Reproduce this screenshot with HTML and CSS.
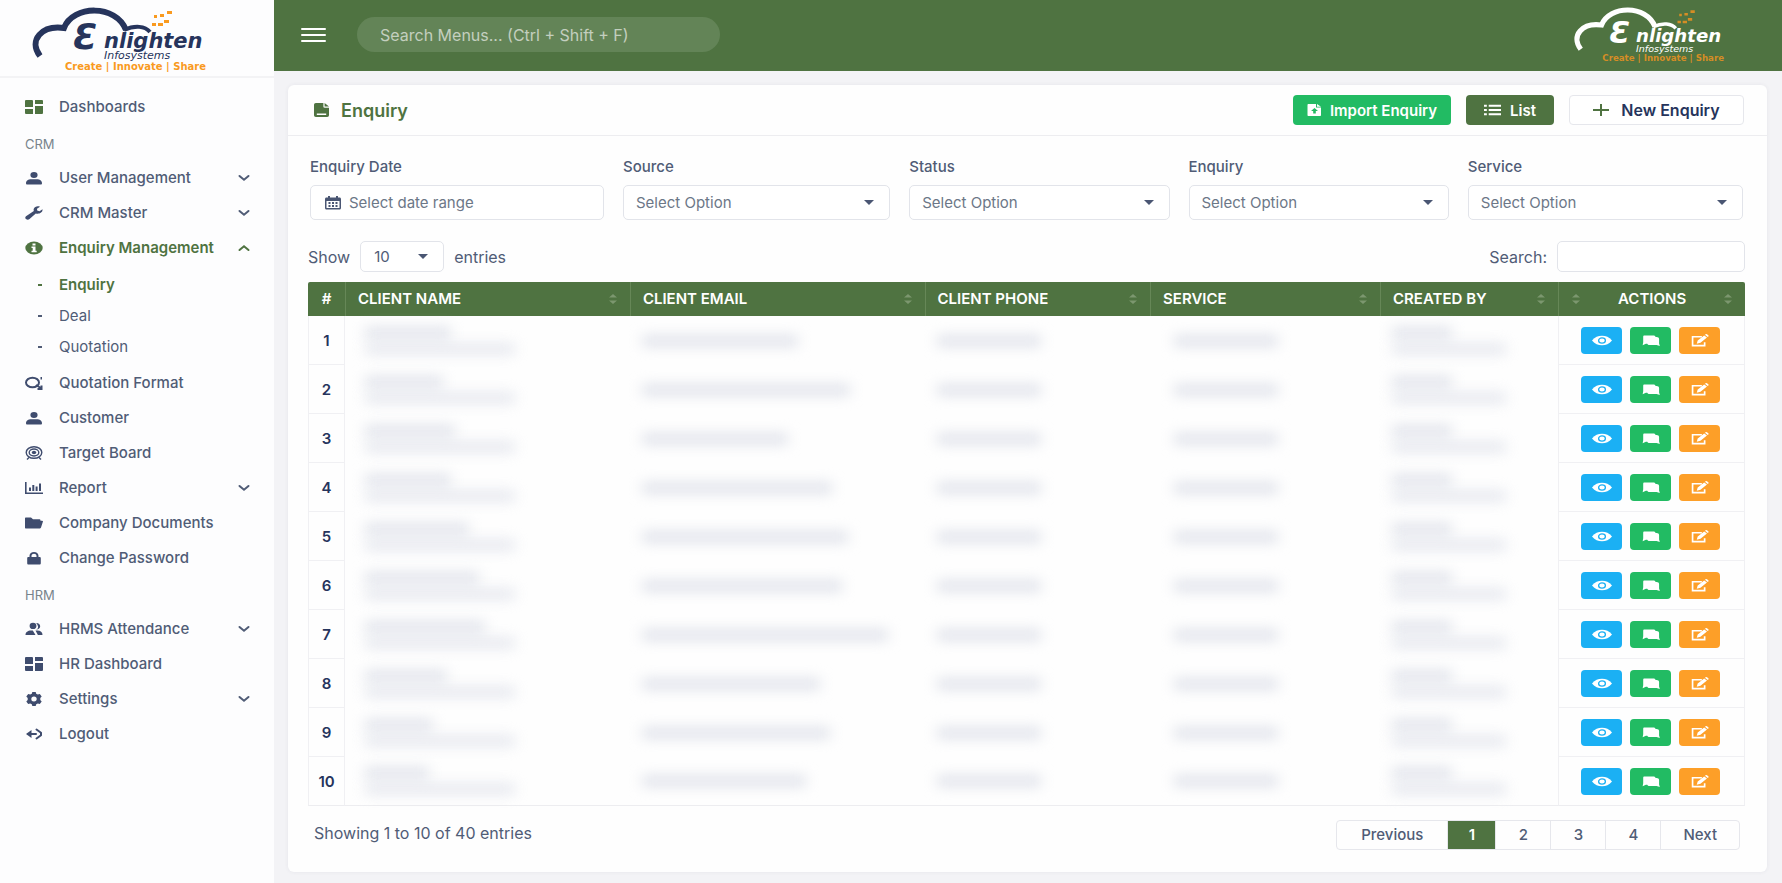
FILE: index.html
```html
<!DOCTYPE html>
<html lang="en">
<head>
  <meta charset="UTF-8">
  <meta name="viewport" content="width=device-width, initial-scale=1.0">
  <title>Enlighten Infosystems - Enquiry</title>
  <link rel="stylesheet" href="styles.css">
</head>
<body>
  <!-- Icons -->
  <svg class="sprite" aria-hidden="true">
    <symbol id="i-dashboard" viewBox="0 0 18 14" preserveAspectRatio="none"><path d="M1 0h6a1 1 0 0 1 1 1v6H0V1a1 1 0 0 1 1-1zM0 9h8v5H1a1 1 0 0 1-1-1zM10 0h7a1 1 0 0 1 1 1v3h-8zM10 6h8v7a1 1 0 0 1-1 1h-7z"/></symbol>
    <symbol id="i-user" viewBox="0 0 18 14"><path d="M9 1a3.600 3 0 1 1 0 6 3.600 3 0 0 1 0-6zM1 12.300C1 9.500 3.500 8.200 6 8.200h6c2.500 0 5 1.300 5 4.100 0 .8-.5 1.200-1.200 1.200H2.200c-.7 0-1.200-.4-1.200-1.200z"/></symbol>
    <symbol id="i-wrench" viewBox="0 0 18 14"><path d="M17.500 3.200l-3 2-2.300-.7-.2-1.800L15 .7C12.500-.3 9.500.6 8.800 2.800c-.3.9-.2 1.500 0 2.200L1 10.300c-1 .8-1 2 0 2.800s2.600.7 3.500 0l6.300-5.700c3.200 1 7.200-.8 6.700-4.200z"/></symbol>
    <symbol id="i-info" viewBox="0 0 18 14"><ellipse cx="9" cy="7" rx="8.700" ry="6.500"/><path d="M7.500 2.500h3v2h-3zM6.500 5.500h4v4.300h1.200v1.400H6.500V9.800h1.200V6.900H6.500z" fill="#fff"/></symbol>
    <symbol id="i-quote" viewBox="0 0 18 14"><g fill="none" stroke="currentColor" stroke-width="2"><ellipse cx="7.500" cy="6.500" rx="6.500" ry="4.800"/><path d="M11 9l5.500 3.500M16.500 9.500v3.500h-4"/></g><path d="M15.500 1h1.500v2.500h-1.500z"/></symbol>
    <symbol id="i-target" viewBox="0 0 18 14"><g fill="none" stroke="currentColor" stroke-width="1.400"><ellipse cx="9" cy="6.500" rx="7.800" ry="5.800"/><ellipse cx="9" cy="6.500" rx="4.800" ry="3.500"/><path d="M4 11.500L2 13.500M14 11.500l2 2"/></g><ellipse cx="9" cy="6.500" rx="2.200" ry="1.700"/></symbol>
    <symbol id="i-chart" viewBox="0 0 18 14"><path d="M0 1h1.600v10.500H18V13H0zM4 6.500h2V10H4zM7.300 4h2v6h-2zM10.600 5.500h2V10h-2zM14 2.500h2V10h-2z"/></symbol>
    <symbol id="i-folder" viewBox="0 0 18 14"><path d="M1 1.500h5l2 1.800h6c1 0 1.500.5 1.500 1.400H17c1 0 1.200.6.8 1.300L16 11.500c-.4.700-.8 1-1.600 1H1c-.7 0-1-.4-1-1v-9c0-.6.3-1 1-1z"/></symbol>
    <symbol id="i-lock" viewBox="0 0 18 14"><path d="M4.500 6V4.800C4.500 2.500 6.500 1 9 1s4.500 1.500 4.500 3.800V6h1c.8 0 1.300.5 1.300 1.200v5c0 .8-.5 1.300-1.300 1.300h-11c-.8 0-1.300-.5-1.300-1.300v-5C2.200 6.500 2.700 6 3.500 6zm2 0h5V4.800c0-1.300-1.200-2-2.500-2s-2.500.7-2.500 2z"/></symbol>
    <symbol id="i-users" viewBox="0 0 18 14"><path d="M8 .8a3.400 3.100 0 1 1 0 6.200 3.400 3.100 0 0 1 0-6.200zM.5 13c0-3 2.500-4.600 5.300-4.600h2L10.500 13zM11 7.500c2-.5 2.700-2.500 1.500-4.600-.6-1-.9-1.400-1.500-1.900 2.500-.2 4.200 1.300 4.200 3.200S13.500 7.700 11 7.500zM10.500 8.400h2c3 0 5 1.600 5 4.600h-4.600z"/></symbol>
    <symbol id="i-gear" viewBox="0 0 18 14"><path fill-rule="evenodd" d="M7.300 0h3.400l.5 1.800 1.600.8 2-.6 1.900 2.500-1.400 1.400v2.200l1.400 1.400-1.900 2.500-2-.6-1.600.8-.5 1.800H7.300l-.5-1.800-1.600-.8-2 .6-1.900-2.500 1.400-1.400V5.900L1.300 4.500 3.200 2l2 .6 1.600-.8zM9 4.500a2.700 2.500 0 1 0 0 5 2.700 2.500 0 0 0 0-5z"/></symbol>
    <symbol id="i-logout" viewBox="0 0 18 14"><g fill="none" stroke="currentColor" stroke-width="2" stroke-linecap="round" stroke-linejoin="round"><path d="M11 7H3"/><path d="M11.500 2.500l4.500 3.300v2.400l-4.500 3.300"/></g><path d="M6.500 3v8L1 7z"/></symbol>
    <symbol id="i-down" viewBox="0 0 12 8"><path d="M1.500 2L6 5.800 10.500 2" fill="none" stroke="currentColor" stroke-width="2" stroke-linecap="round"/></symbol>
    <symbol id="i-up" viewBox="0 0 12 8"><path d="M1.500 6L6 2.200 10.500 6" fill="none" stroke="currentColor" stroke-width="2" stroke-linecap="round"/></symbol>
    <symbol id="i-file" viewBox="0 0 16 14" preserveAspectRatio="none"><path d="M2 0h8v3.500c0 .8.500 1.200 1.300 1.200H16V12c0 1.300-.7 2-2 2H2c-1.300 0-2-.7-2-2V2C0 .7.700 0 2 0zM11.300 0L16 3.600h-4.700z"/><path d="M3 10.500h10V12H3z" fill="#fff"/></symbol>
    <symbol id="i-import" viewBox="0 0 14 12"><path d="M1.500 0H9v3.500h5V11c0 .6-.4 1-1 1H1.500c-.6 0-1-.4-1-1V1c0-.6.400-1 1-1zM10 0l4 2.700h-4z"/><path d="M7.500 4L4 7h2.200v2.500h2.600V7H11z" fill="#22bb63"/></symbol>
    <symbol id="i-list" viewBox="0 0 18 12"><path d="M0 .5h3v2H0zM0 5h3v2H0zM0 9.500h3v2H0zM5 .5h13v2H5zM5 5h13v2H5zM5 9.500h13v2H5z"/></symbol>
    <symbol id="i-plus" viewBox="0 0 16 12"><path d="M7 0h2v5h7v2H9v5H7V7H0V5h7z"/></symbol>
    <symbol id="i-calendar" viewBox="0 0 16 14"><path fill-rule="evenodd" d="M3 0h2v1.500h6V0h2v1.500h1.500c.9 0 1.500.6 1.500 1.500v9c0 .9-.6 1.500-1.500 1.500h-13C.6 13.500 0 12.900 0 12V3c0-.9.600-1.500 1.500-1.500H3zM1.500 5v7h13V5z"/><path d="M3.500 6h2v2h-2zM7 6h2v2H7zM10.500 6h2v2h-2zM3.500 9h2v2h-2zM7 9h2v2H7zM10.500 9h2v2h-2z"/></symbol>
    <symbol id="i-sort" viewBox="0 0 10 12"><path d="M5 1l4 3.500H1zM5 11l4-3.500H1z"/></symbol>
    <symbol id="i-eye" viewBox="0 0 20 12"><path d="M0 6C3 2.500 6 1.200 10 1.200S17 2.500 20 6c-3 3.500-6 4.800-10 4.800S3 9.500 0 6z"/><ellipse cx="10" cy="6" rx="3.400" ry="2.600" fill="none" stroke="#1bb0f4" stroke-width="1.300"/></symbol>
    <symbol id="i-chat" viewBox="0 0 20 14"><path d="M3 1.500h9.500c1.400 0 2.300.6 2.500 1.800h1c1.700 0 2.700.8 2.700 2.200v4.800l.8 2.700-3.500-1.200H8.500c-1.300 0-2.200-.4-2.500-1.300H4.500L1 12l.6-3V3c0-1 .4-1.500 1.400-1.500z"/></symbol>
    <symbol id="i-edit" viewBox="0 0 20 14"><path d="M12 3H2v9.500h13V9" fill="none" stroke="currentColor" stroke-width="1.800"/><path d="M6.500 10.500l1-3.500 7-5.500 3 2.300-7 5.700zM15.300.9L16.500 0c.4-.2 2.800 1.500 3 2.200l-1.200 1z"/></symbol>
  </svg>

  <aside class="sidebar">
    <a href="#" class="brand" aria-label="Enlighten Infosystems">
      <svg class="logo" viewBox="30 6 178 66">
        <path class="logo-cloud" d="M40 56C28 40 42 25 64 28 73 5 116 4 126 30"/>
        <path class="logo-tail" d="M124 30c11-5 21-4 26 2"/>
        <text class="logo-e" x="73" y="49">Ɛ</text>
        <text class="logo-name" x="104" y="48">nlighten</text>
        <text class="logo-sub" x="104" y="59">Infosystems</text>
        <text class="logo-tag" x="65" y="70">Create | Innovate | Share</text>
        <path class="logo-dots" d="M167 11h5v3h-5zM160 14h4v3h-4zM154 15h3v3h-3zM164 20h5v3h-5zM158 23h5v3h-5zM152 23h4v3h-4z"/>
      </svg>
    </a>
    <nav class="menu">
      <a href="#" class="menu-item"><svg class="icon green"><use href="#i-dashboard"/></svg>Dashboards</a>
      <div class="menu-head">CRM</div>
      <a href="#" class="menu-item"><svg class="icon"><use href="#i-user"/></svg>User Management<svg class="arrow"><use href="#i-down"/></svg></a>
      <a href="#" class="menu-item"><svg class="icon"><use href="#i-wrench"/></svg>CRM Master<svg class="arrow"><use href="#i-down"/></svg></a>
      <a href="#" class="menu-item active"><svg class="icon"><use href="#i-info"/></svg>Enquiry Management<svg class="arrow"><use href="#i-up"/></svg></a>
      <div class="submenu">
        <a href="#" class="active">Enquiry</a>
        <a href="#">Deal</a>
        <a href="#">Quotation</a>
      </div>
      <a href="#" class="menu-item"><svg class="icon"><use href="#i-quote"/></svg>Quotation Format</a>
      <a href="#" class="menu-item"><svg class="icon"><use href="#i-user"/></svg>Customer</a>
      <a href="#" class="menu-item"><svg class="icon"><use href="#i-target"/></svg>Target Board</a>
      <a href="#" class="menu-item"><svg class="icon"><use href="#i-chart"/></svg>Report<svg class="arrow"><use href="#i-down"/></svg></a>
      <a href="#" class="menu-item"><svg class="icon"><use href="#i-folder"/></svg>Company Documents</a>
      <a href="#" class="menu-item"><svg class="icon"><use href="#i-lock"/></svg>Change Password</a>
      <div class="menu-head">HRM</div>
      <a href="#" class="menu-item"><svg class="icon"><use href="#i-users"/></svg>HRMS Attendance<svg class="arrow"><use href="#i-down"/></svg></a>
      <a href="#" class="menu-item"><svg class="icon"><use href="#i-dashboard"/></svg>HR Dashboard</a>
      <a href="#" class="menu-item"><svg class="icon"><use href="#i-gear"/></svg>Settings<svg class="arrow"><use href="#i-down"/></svg></a>
      <a href="#" class="menu-item"><svg class="icon"><use href="#i-logout"/></svg>Logout</a>
    </nav>
  </aside>

  <div class="page">
    <header class="topbar">
      <button type="button" class="burger" aria-label="Toggle menu"><span></span><span></span><span></span></button>
      <input type="search" class="menu-search" placeholder="Search Menus... (Ctrl + Shift + F)" aria-label="Search menus">
      <svg class="logo logo-light" viewBox="30 6 178 66">
        <path class="logo-cloud" d="M40 56C28 40 42 25 64 28 73 5 116 4 126 30"/>
        <path class="logo-tail" d="M124 30c11-5 21-4 26 2"/>
        <text class="logo-e" x="73" y="49">Ɛ</text>
        <text class="logo-name" x="104" y="48">nlighten</text>
        <text class="logo-sub" x="104" y="59">Infosystems</text>
        <text class="logo-tag" x="65" y="70">Create | Innovate | Share</text>
        <path class="logo-dots" d="M167 11h5v3h-5zM160 14h4v3h-4zM154 15h3v3h-3zM164 20h5v3h-5zM158 23h5v3h-5zM152 23h4v3h-4z"/>
      </svg>
    </header>

    <main class="card">
      <div class="card-header">
        <svg class="title-icon"><use href="#i-file"/></svg>
        <h1>Enquiry</h1>
        <div class="card-actions">
          <button type="button" class="btn btn-import"><svg><use href="#i-import"/></svg>Import Enquiry</button>
          <button type="button" class="btn btn-list"><svg><use href="#i-list"/></svg>List</button>
          <button type="button" class="btn btn-new"><svg><use href="#i-plus"/></svg>New Enquiry</button>
        </div>
      </div>

      <div class="card-body">
        <form class="filters">
          <div class="field">
            <label for="date">Enquiry Date</label>
            <div class="date-box">
              <svg><use href="#i-calendar"/></svg>
              <input type="text" id="date" placeholder="Select date range">
            </div>
          </div>
          <div class="field">
            <label for="source">Source</label>
            <select id="source"><option>Select Option</option></select>
          </div>
          <div class="field">
            <label for="status">Status</label>
            <select id="status"><option>Select Option</option></select>
          </div>
          <div class="field">
            <label for="enquiry">Enquiry</label>
            <select id="enquiry"><option>Select Option</option></select>
          </div>
          <div class="field">
            <label for="service">Service</label>
            <select id="service"><option>Select Option</option></select>
          </div>
        </form>

        <div class="table-tools">
          <label for="length">Show</label>
          <select id="length"><option>10</option><option>25</option><option>50</option></select>
          <span>entries</span>
          <label for="search" class="search-label">Search:</label>
          <input type="search" id="search">
        </div>

        <table>
          <thead>
            <tr>
              <th class="col-no">#</th>
              <th class="col-name"><div>CLIENT NAME<svg><use href="#i-sort"/></svg></div></th>
              <th class="col-email"><div>CLIENT EMAIL<svg><use href="#i-sort"/></svg></div></th>
              <th class="col-phone"><div>CLIENT PHONE<svg><use href="#i-sort"/></svg></div></th>
              <th class="col-service"><div>SERVICE<svg><use href="#i-sort"/></svg></div></th>
              <th class="col-created"><div>CREATED BY<svg><use href="#i-sort"/></svg></div></th>
              <th class="col-actions"><div><svg><use href="#i-sort"/></svg>ACTIONS<svg><use href="#i-sort"/></svg></div></th>
            </tr>
          </thead>
          <tbody id="rows"></tbody>
        </table>

        <div class="table-footer">
          <span>Showing 1 to 10 of 40 entries</span>
          <nav class="pagination" aria-label="Pages">
            <a href="#">Previous</a>
            <a href="#" class="current">1</a>
            <a href="#">2</a>
            <a href="#">3</a>
            <a href="#">4</a>
            <a href="#">Next</a>
          </nav>
        </div>
      </div>
    </main>
  </div>

  <script>
    // Client data is masked, only the length of each value is kept: [name, email]
    const clients = [
      [86, 156], [78, 208], [90, 146], [86, 190], [104, 206],
      [114, 200], [120, 246], [82, 178], [68, 188], [64, 164]
    ];
    const mask = (w) => `<span class="mask" style="width:${w}px"></span>`;

    document.getElementById('rows').innerHTML = clients.map(([name, email], i) => `
      <tr>
        <td class="no">${i + 1}</td>
        <td class="name">${mask(name)}${mask(150)}</td>
        <td>${mask(email)}</td>
        <td>${mask(104)}</td>
        <td class="indent">${mask(104)}</td>
        <td>${mask(60)}${mask(114)}</td>
        <td class="actions">
          <div>
            <button type="button" class="view" aria-label="View"><svg><use href="#i-eye"/></svg></button>
            <button type="button" class="chat" aria-label="Follow up"><svg><use href="#i-chat"/></svg></button>
            <button type="button" class="edit" aria-label="Edit"><svg><use href="#i-edit"/></svg></button>
          </div>
        </td>
      </tr>`).join('');
  </script>
</body>
</html>
```
FILE: styles.css
```css
* { margin: 0; padding: 0; box-sizing: border-box; }
body {
  display: flex;
  min-height: 100vh;
  font-family: Inter, "Liberation Sans", sans-serif;
  font-size: 15px;
  color: #505c76;
  background: #f3f3f6;
}
a { color: inherit; text-decoration: none; }
button, input, select { font: inherit; color: inherit; }
button { border: none; cursor: pointer; }
svg { fill: currentColor; flex: none; }
.sprite { position: absolute; width: 0; height: 0; }

/* Sidebar */
.sidebar {
  flex: 0 0 274px;
  background: #fdfdfe;
}
.brand {
  display: block;
  height: 78px;
  padding: 6px 30px;
  border-bottom: 2px solid #f3f3f5;
}
.logo {
  display: block;
  width: 178px;
  height: 66px;
  color: #26345c;
}
.logo-cloud, .logo-tail { fill: none; stroke: currentColor; stroke-width: 6; }
.logo-tail { stroke-width: 4; }
.logo-e { font: italic bold 35px "DejaVu Sans", sans-serif; }
.logo-name { font: italic bold 21px "DejaVu Sans", sans-serif; }
.logo-sub { font: italic 11px "DejaVu Sans", sans-serif; }
.logo-tag { font: bold 10px "DejaVu Sans", sans-serif; fill: #f99a1f; }
.logo-dots { fill: #f99a1f; }
.logo-light {
  width: 154px;
  height: 57px;
  margin-left: auto;
  color: #fff;
}
.logo-light .logo-tag, .logo-light .logo-dots { fill: #d58d25; }

.menu { padding-top: 11px; }
.menu-item {
  display: flex;
  align-items: center;
  height: 35px;
  padding: 0 24px 0 25px;
  font-weight: 500;
}
.icon {
  width: 18px;
  height: 14px;
  margin-right: 16px;
  color: #3f4c6e;
}
.green { color: #4f7341; }
.arrow {
  width: 12px;
  height: 8px;
  margin-left: auto;
}
.menu-head {
  height: 36px;
  padding: 5px 25px 0;
  line-height: 31px;
  font-size: 13px;
  color: #78848c;
}
.active, .active .icon { color: #4f7341; }
.menu-item.active, .submenu .active { font-weight: 600; }
.submenu { padding: 4px 0 3px; }
.submenu a {
  display: flex;
  align-items: center;
  height: 31px;
  padding-left: 38px;
}
.submenu a::before {
  content: "";
  width: 4px;
  height: 2px;
  margin-right: 17px;
  background: currentColor;
}

/* Top bar */
.page { flex: 1; min-width: 0; }
.topbar {
  display: flex;
  align-items: center;
  height: 71px;
  padding: 0 56px 2px 27px;
  background: #4f7341;
}
.burger {
  display: grid;
  gap: 4px;
  width: 25px;
  margin-right: 31px;
  background: none;
}
.burger span { height: 2px; background: #fff; border-radius: 1px; }
.menu-search {
  width: 363px;
  height: 35px;
  padding: 0 23px;
  border: none;
  border-radius: 18px;
  font-size: 16px;
  background: #638457;
}
.menu-search::placeholder { color: #c3cfbf; opacity: 1; }

/* Card */
.card {
  margin: 14px 15px 12px 14px;
  background: #fefefe;
  border-radius: 6px;
  box-shadow: 0 0 4px rgba(60,60,90,0.07);
}
.card-header {
  display: flex;
  align-items: center;
  height: 51px;
  padding: 0 23px 0 26px;
  border-bottom: 1px solid #ededf0;
}
.title-icon {
  width: 15px;
  height: 14px;
  margin-right: 12px;
  color: #4f7341;
}
h1 { font-size: 18px; font-weight: 600; color: #4f7341; }
.card-actions {
  display: flex;
  gap: 15px;
  margin-left: auto;
}
.btn {
  display: flex;
  align-items: center;
  justify-content: center;
  gap: 9px;
  height: 30px;
  border-radius: 4px;
  font-size: 15px;
  font-weight: 600;
  color: #fff;
}
.btn svg { width: 14px; height: 12px; }
.btn-import { width: 158px; background: #22bb63; }
.btn-list { width: 88px; background: #4f7341; }
.btn-list svg { width: 17px; }
.btn-new {
  width: 175px;
  gap: 12px;
  font-size: 16px;
  color: #26345c;
  background: #fff;
  border: 1px solid #e6e7ec;
}
.btn-new svg { width: 16px; color: #4f7341; }

.card-body { padding: 21px 22px 22px 20px; }

/* Filters */
.filters {
  display: grid;
  grid-template-columns: 291fr 268fr 261fr 261fr 276fr;
  gap: 19px;
  padding: 0 2px;
}
.field label {
  display: block;
  margin-bottom: 8px;
  line-height: 20px;
  font-weight: 500;
}
select, .date-box, #search {
  border: 1px solid #e2e4ea;
  border-radius: 5px;
  background-color: #fff;
}
.date-box, .field select {
  width: 100%;
  height: 35px;
  color: #6c7787;
}
.date-box {
  display: flex;
  align-items: center;
  gap: 8px;
  padding: 0 14px;
}
.date-box svg { width: 16px; height: 14px; color: #4a5673; }
.date-box input {
  flex: 1;
  min-width: 0;
  border: none;
  outline: none;
  background: none;
}
.date-box input::placeholder { color: #6c7787; opacity: 1; }
select {
  appearance: none;
  padding: 0 12px;
  background-image: url("data:image/svg+xml,%3Csvg xmlns='http://www.w3.org/2000/svg' viewBox='0 0 10 5'%3E%3Cpath d='M0 0h10L5 5z' fill='%234a5673'/%3E%3C/svg%3E");
  background-repeat: no-repeat;
  background-position: right 15px center;
  background-size: 10px 5px;
}

/* Table */
.table-tools {
  display: flex;
  align-items: center;
  margin: 21px 0 10px;
  font-size: 16px;
}
.table-tools select {
  width: 84px;
  height: 31px;
  margin: 0 10px;
  padding: 0 13px;
  font-size: 15px;
}
.search-label { margin-left: auto; }
#search {
  width: 188px;
  height: 31px;
  margin-left: 10px;
  padding: 0 10px;
}
table {
  width: 100%;
  table-layout: fixed;
  border-collapse: separate;
  border-spacing: 0;
}
th {
  height: 34px;
  padding: 0 12px 1px;
  font-weight: 600;
  color: #fff;
  background: #4f7341;
  border-left: 1px solid #668757;
}
th:first-child {
  padding: 0 0 1px;
  border-left: none;
  border-top-left-radius: 2px;
}
th:last-child { border-top-right-radius: 2px; }
th div {
  display: flex;
  align-items: center;
  justify-content: space-between;
}
th svg { width: 10px; height: 12px; color: #7c976f; }
/* The name column takes what the others leave */
.col-no { width: 37px; }
.col-email { width: 20.5%; }
.col-phone { width: 15.7%; }
.col-service { width: 16%; }
.col-created { width: 12.4%; }
.col-actions { width: 13%; }
td {
  height: 49px;
  padding: 0 12px;
  vertical-align: middle;
}
tr:last-child td { border-bottom: 1px solid #ededf0; }
td.no, td.actions {
  padding: 0;
  text-align: center;
  border: 1px solid #f0f0f3;
  border-top: none;
}
.no { font-weight: 600; color: #26345c; }
td.name { padding-left: 20px; }
td.indent { padding-left: 24px; }
.mask {
  display: block;
  height: 10px;
  background: #dcdfe8;
  filter: blur(7px);
}
.mask + .mask { margin-top: 6px; opacity: 0.8; }
.actions div {
  display: flex;
  justify-content: center;
  gap: 8px;
  padding-right: 2px;
}
.actions button {
  display: grid;
  place-items: center;
  width: 41px;
  height: 27px;
  border-radius: 4px;
  color: #fff;
}
.actions svg { width: 20px; height: 13px; }
.view { background: #1bb0f4; }
.chat { background: #22bb63; }
.edit { background: #fd9f28; }

.table-footer {
  display: flex;
  align-items: flex-start;
  justify-content: space-between;
  padding: 14px 5px 0 6px;
  font-size: 16px;
}
.table-footer > span { line-height: 26px; }
.pagination {
  display: flex;
  border: 1px solid #e6e7ec;
  border-radius: 4px;
}
.pagination a {
  min-width: 55px;
  padding: 0 22px;
  font-size: 15px;
  font-weight: 500;
  text-align: center;
  line-height: 28px;
  border-left: 1px solid #e6e7ec;
}
.pagination a:first-child { padding: 0 24px; border-left: none; }
.pagination .current {
  min-width: 48px;
  padding: 0 19px;
  font-weight: 600;
  color: #fff;
  background: #4f7341;
}
```
